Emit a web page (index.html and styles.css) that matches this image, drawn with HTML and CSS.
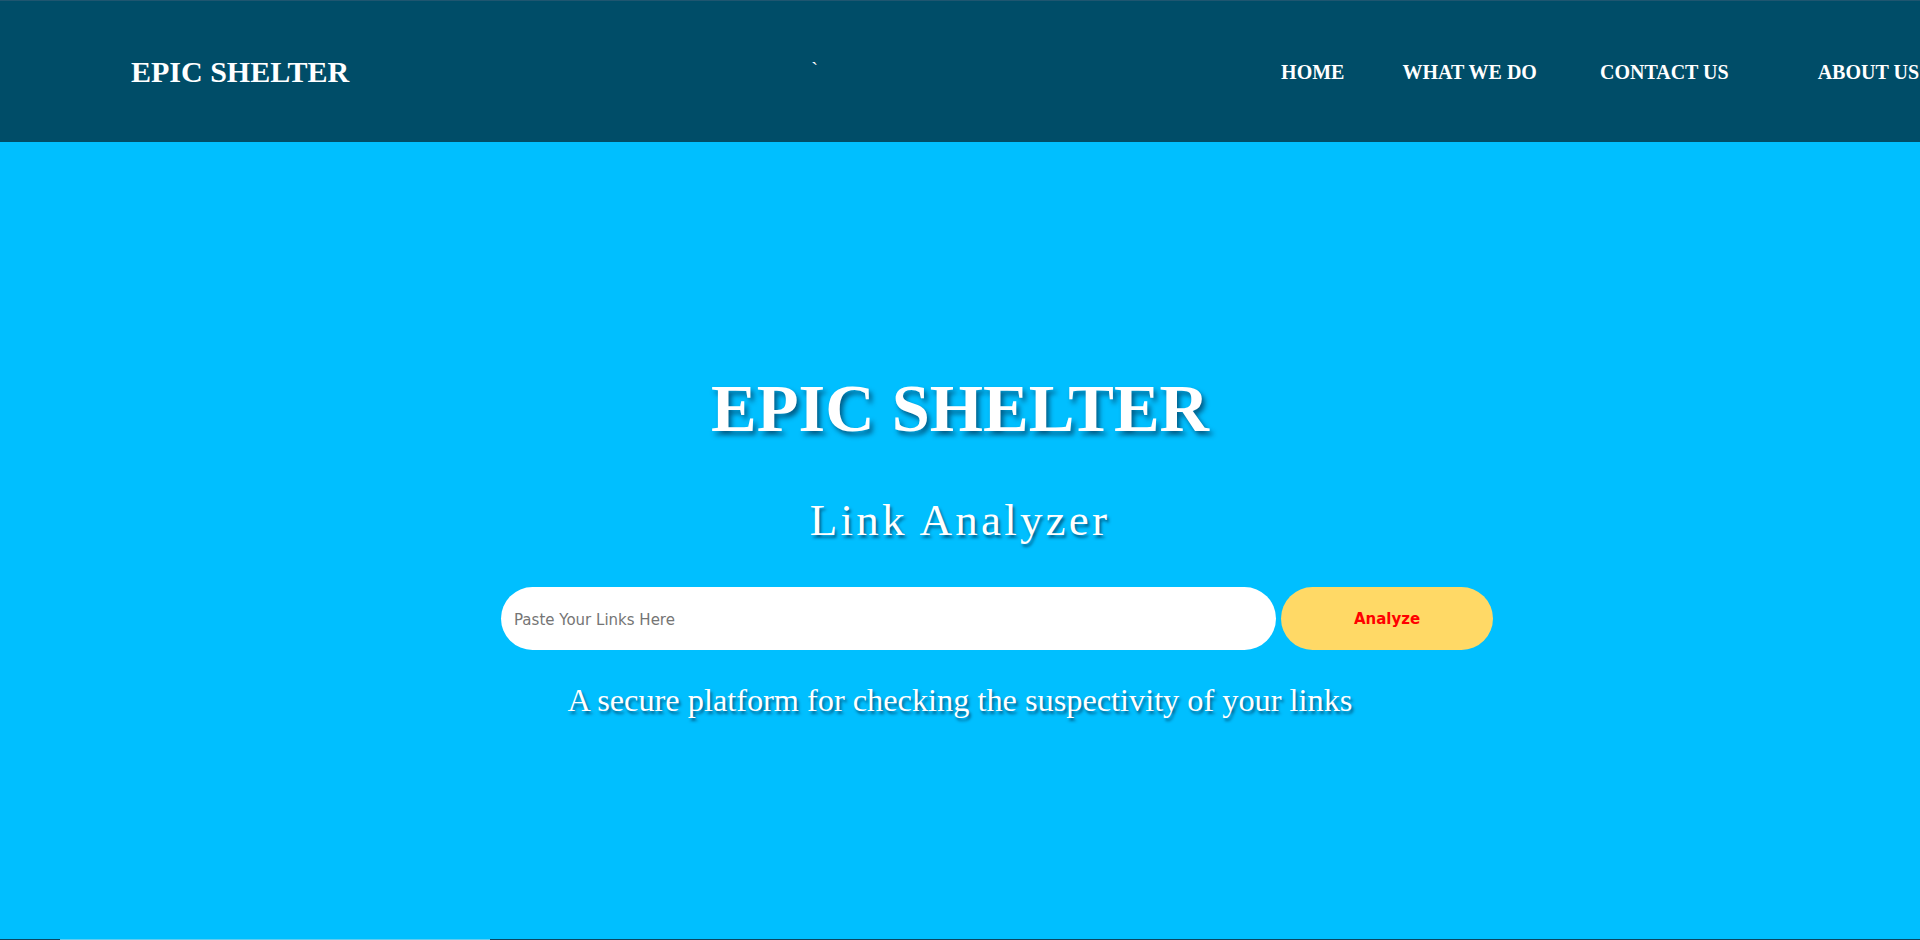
FILE: index.html
```html
<!DOCTYPE html>
<html lang="en">
<head>
<meta charset="utf-8">
<title>Epic Shelter - Link Analyzer</title>
<link rel="stylesheet" href="styles.css">
</head>
<body>
<header class="topbar">
  <div class="logo">EPIC SHELTER</div>
  <span class="tick">`</span>
  <nav class="nav">
    <a class="nav-item" href="#">HOME</a>
    <a class="nav-item nav-what" href="#">WHAT WE DO</a>
    <a class="nav-item nav-contact" href="#">CONTACT US</a>
    <a class="nav-item nav-about" href="#">ABOUT US</a>
  </nav>
</header>
<main class="hero">
  <h1 class="title">EPIC SHELTER</h1>
  <h2 class="subtitle">Link Analyzer</h2>
  <form class="search" onsubmit="return false">
    <input class="search-input" type="text" placeholder="Paste Your Links Here">
    <button class="search-btn" type="submit">Analyze</button>
  </form>
  <p class="tagline">A secure platform for checking the suspectivity of your links</p>
</main>
<div class="edge"><span class="edge-light"></span></div>
</body>
</html>
```
FILE: styles.css
```css
html, body {
  margin: 0;
  padding: 0;
  height: 100%;
  overflow: hidden;
}
body {
  background: #00bfff;
  font-family: "Liberation Serif", "Times New Roman", serif;
  display: flex;
  flex-direction: column;
}
.topbar {
  flex: 0 0 auto;
  height: 141px;
  border-top: 1px solid #1f5670;
  background: #004d68;
  display: flex;
  align-items: center;
  padding-left: 131px;
  overflow: hidden;
  color: #fff;
}
.logo {
  flex: 0 0 auto;
  font-size: 30px;
  line-height: 1;
  font-weight: bold;
  white-space: nowrap;
}
.tick {
  flex: 0 0 auto;
  margin-left: 462px;
  margin-top: -4px;
  font-size: 20px;
  line-height: 1;
}
.nav {
  margin-left: auto;
  display: flex;
  flex: 0 0 auto;
  padding-right: 1px;
}
.nav-item {
  color: #fff;
  text-decoration: none;
  font-weight: bold;
  font-size: 20px;
  line-height: 1;
  white-space: nowrap;
}
.nav-what { margin-left: 58px; }
.nav-contact { margin-left: 63px; }
.nav-about { margin-left: 89px; }
.hero {
  flex: 1 1 auto;
  display: flex;
  flex-direction: column;
  align-items: center;
  padding-top: 232px;
  color: #fff;
}
.title {
  margin: 0;
  font-size: 68.5px;
  line-height: 1;
  font-weight: bold;
  text-shadow: 3px 4px 5px rgba(0, 40, 70, 0.65);
}
.subtitle {
  margin: 55px 0 0;
  font-size: 45px;
  line-height: 1;
  font-weight: normal;
  letter-spacing: 3.2px;
  text-shadow: 2px 3px 3px rgba(0, 40, 70, 0.6);
}
.search {
  margin: 44px 0 0;
  display: flex;
  align-self: stretch;
  justify-content: center;
  padding-left: 74px;
}
.search-input {
  box-sizing: border-box;
  width: 775px;
  height: 63px;
  border: none;
  outline: none;
  border-radius: 32px;
  padding: 3px 0 0 13px;
  background: #fff;
  font-family: "DejaVu Sans", Verdana, sans-serif;
  font-size: 15px;
  color: #333;
}
.search-input::placeholder {
  color: #757575;
}
.search-btn {
  width: 212px;
  height: 63px;
  margin-left: 5px;
  padding-top: 3px;
  border: none;
  border-radius: 32px;
  background: #ffd966;
  color: #f00;
  font-family: "DejaVu Sans", Verdana, sans-serif;
  font-weight: bold;
  font-size: 15px;
  cursor: pointer;
}
.tagline {
  margin: 34px 0 0;
  font-size: 32.3px;
  line-height: 1;
  text-shadow: 2px 3px 3px rgba(0, 40, 70, 0.6);
}
.edge {
  flex: 0 0 1px;
  height: 1px;
  background: #0b4560;
  display: flex;
}
.edge-light {
  margin-left: 60px;
  width: 430px;
  background: #62cbee;
}
```
